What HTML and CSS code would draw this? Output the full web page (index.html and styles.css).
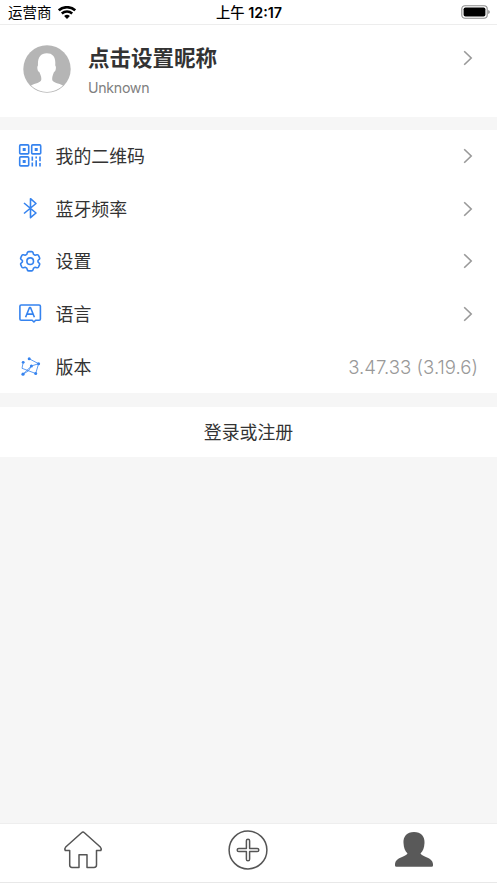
FILE: index.html
```
<!DOCTYPE html>
<html lang="zh-CN">
<head>
<meta charset="utf-8">
<title>我的</title>
<link rel="stylesheet" href="styles.css">
</head>
<body>
<header class="status">
  <div class="carrier"><span>运营商</span>
    <svg width="18" height="13" viewBox="0 0 18 13"><g fill="none" stroke="#000" stroke-width="2.5"><path d="M.8 4.3C5.4.1 12.6.1 17.2 4.3"/><path d="M3.8 7.5C6.8 4.8 11.2 4.8 14.2 7.5"/></g><path d="M6.1 10Q9 7.6 11.9 10L9 12.9Z"/></svg>
  </div>
  <div class="time">上午 <b>12:17</b></div>
  <svg class="battery" width="29" height="14" viewBox="0 0 29 14"><rect x=".8" y=".8" width="25.4" height="12.4" rx="3.2" fill="#fff" stroke="#8c8c8c" stroke-width="1.1"/><rect x="2.6" y="2.4" width="21.8" height="9.2" rx="1.8"/><path d="M27.3 5v4q1.4-.5 1.4-2t-1.4-2" fill="#777"/></svg>
</header>
<section class="profile">
  <svg class="avatar" width="48" height="48" viewBox="0 0 48 48"><circle cx="24" cy="24" r="23.7" fill="#b5b5b5"/><path d="M8 40.5C12 38 18 38 18.3 34.5C18.5 31.5 17.5 30 16.3 27C14.2 26.4 13.8 21.3 15 20.4C14.5 12.5 17.5 8.3 23.8 8.3S33 12.5 32.2 20.4C33.5 21.3 33 26.4 31 27C30 30 29 31.5 29.2 34.5C29.5 38 36 38 40 40.5A23.1 23.1 0 0 1 8 40.5Z" fill="#fff"/></svg>
  <div class="identity"><h1>点击设置昵称</h1><p>Unknown</p></div>
  <svg class="chevron" width="10" height="16" viewBox="0 0 10 16"><path d="M1.2 1.2L8.2 8L1.2 14.8"/></svg>
</section>
<main class="menu">
  <div class="row">
    <svg class="icon" viewBox="0 0 24 24"><rect x="1.7" y=".9" width="9" height="9" rx="1"/><rect x="13.7" y=".9" width="9" height="9" rx="1"/><rect x="1.7" y="12.9" width="9" height="9" rx="1"/><path class="solid" d="M4.7 3.9h3v3h-3zM16.7 3.9h3v3h-3zM4.7 15.9h3v3h-3z"/><path d="M14.3 12.5v4.3M14.3 18.5v4M18.2 12.5v2M18.2 16.2v6.3M22 12.5v4.8M22 19v3.5"/></svg>
    <span class="label">我的二维码</span>
    <svg class="chevron" width="10" height="16" viewBox="0 0 10 16"><path d="M1.2 1.2L8.2 8L1.2 14.8"/></svg>
  </div>
  <div class="row">
    <svg class="icon" viewBox="0 0 24 24"><path d="M6 6L18 16L12.5 20.7V1.7L18 6.5L6 16.5"/></svg>
    <span class="label">蓝牙频率</span>
    <svg class="chevron" width="10" height="16" viewBox="0 0 10 16"><path d="M1.2 1.2L8.2 8L1.2 14.8"/></svg>
  </div>
  <div class="row">
    <svg class="icon" viewBox="0 0 24 24"><path d="M9.3 3.6Q9.7 2.6 10.7 2.6H13.7Q14.7 2.6 15 3.6L15.5 5.4L17.2 6.3L18.9 5.8Q19.9 5.5 20.4 6.4L21.5 8.7Q22 9.6 21.2 10.3L20 11.5V13L21.2 14.2Q22 14.9 21.5 15.8L20.4 18.1Q19.9 19 18.9 18.7L17.2 18.2L15.5 19.1L15 20.9Q14.7 21.9 13.7 21.9H10.7Q9.7 21.9 9.3 20.9L8.8 19.1L7.1 18.2L5.4 18.7Q4.4 19 3.9 18.1L2.8 15.8Q2.3 14.9 3.1 14.2L4.4 13V11.5L3.1 10.3Q2.3 9.6 2.8 8.7L3.9 6.4Q4.4 5.5 5.4 5.8L7.1 6.3L8.8 5.4Z"/><circle cx="12.2" cy="12.2" r="3.3"/></svg>
    <span class="label">设置</span>
    <svg class="chevron" width="10" height="16" viewBox="0 0 10 16"><path d="M1.2 1.2L8.2 8L1.2 14.8"/></svg>
  </div>
  <div class="row">
    <svg class="icon" viewBox="0 0 24 24"><path d="M3.2 3H21.1Q22.4 3 22.4 4.3V17Q22.4 18.3 21.1 18.3H17.6L15.9 20L14.2 18.3H3.2Q1.9 18.3 1.9 17V4.3Q1.9 3 3.2 3ZM7.6 15.3L11.5 5.5H12.5L16.4 15.3M9 12.1H15"/></svg>
    <span class="label">语言</span>
    <svg class="chevron" width="10" height="16" viewBox="0 0 10 16"><path d="M1.2 1.2L8.2 8L1.2 14.8"/></svg>
  </div>
  <div class="row">
    <svg class="icon network" viewBox="0 0 24 24"><path d="M5.2 7.3L4 13.3L17.7 18.5L20.6 8.7L11.2 3.8M5 19.2L13.4 11L20.6 8.7M5 19.2L10.5 15.8L13.4 11"/><g class="solid"><circle cx="5.2" cy="7.3" r="1.4"/><circle cx="11.2" cy="3.8" r="1.5"/><circle cx="20.6" cy="8.7" r="1.5"/><circle cx="13.4" cy="11" r="1.5"/><circle cx="5" cy="19.2" r="1.6"/><circle cx="17.7" cy="18.5" r="1.5"/></g></svg>
    <span class="label">版本</span>
    <span class="version">3.47.33 (3.19.6)</span>
  </div>
</main>
<div class="login">登录或注册</div>
<nav class="tabs">
  <svg viewBox="0 0 40 40"><path d="M18.6 2.7Q20 1.3 21.4 2.7L37.3 17Q38.8 18.6 37.8 20.6H33.5V35Q33.5 37.4 31 37.4H24V24.8H16V37.4H9Q6.7 37.4 6.7 35V20.6H2.3Q1.3 18.6 2.7 17Z"/></svg>
  <svg viewBox="0 0 40 40"><circle cx="20" cy="20" r="18.9"/><path d="M18.4 10.8a1.6 1.6 0 0 1 3.2 0v7.6h7.6a1.6 1.6 0 0 1 0 3.2h-7.6v7.6a1.6 1.6 0 0 1-3.2 0v-7.6h-7.6a1.6 1.6 0 0 1 0-3.2h7.6Z"/></svg>
  <svg class="active" viewBox="0 0 40 40"><path d="M20 2C27 2 31 6.5 30.5 13C30.2 18 29 21 26.5 23.5C27.5 26.5 38.8 27.5 39 34V35.5Q39 36.8 37.5 36.8H2.5Q1 36.8 1 35.5V34C1.2 27.5 12.5 26.5 13.5 23.5C11 21 9.8 18 9.5 13C9 6.5 13 2 20 2Z"/></svg>
</nav>
</body>
</html>
```
FILE: styles.css
```
* { box-sizing: border-box; }
body {
  margin: 0;
  height: 883px;
  display: flex;
  flex-direction: column;
  background: #f6f6f6;
  color: #333;
  font-family: Inter, "Noto Sans CJK SC", sans-serif;
}
svg { display: block; flex: none; }
.status {
  height: 25px;
  flex: none;
  display: grid;
  grid-template-columns: 1fr auto 1fr;
  align-items: center;
  padding: 0 7px 0 8px;
  background: #fff;
  border-bottom: 1px solid #ededed;
  color: #000;
  font-size: 14.5px;
  line-height: 24px;
}
.carrier { display: flex; align-items: center; gap: 6px; }
.carrier span, .time { padding-top: 2px; line-height: 22px; }
.time { font-size: 14.3px; font-weight: 500; white-space: nowrap; }
.time b { font-weight: 600; }
.battery { justify-self: end; }
.profile {
  height: 92px;
  flex: none;
  display: flex;
  align-items: flex-start;
  padding: 20px 24px 0 23px;
  background: #fff;
}
.identity { margin-left: 17px; flex: 1; }
h1 { margin: -2px 0 0; font-size: 21.5px; line-height: 30px; font-weight: 700; }
p { margin: 5px 0 0; font-size: 14.2px; line-height: 20px; letter-spacing: -.3px; color: #808080; }
.profile .chevron { margin-top: 5px; }
.chevron path { fill: none; stroke: #999; stroke-width: 1.6; }
.menu {
  height: 263px;
  flex: none;
  display: grid;
  grid-template-rows: repeat(5, 1fr);
  margin-top: 13px;
  background: #fff;
}
.row { display: flex; align-items: center; padding: 0 24px 0 18px; }
.icon { width: 24px; height: 24px; fill: none; stroke: #3583ef; stroke-width: 1.6; stroke-linejoin: round; }
.icon .solid { fill: #3583ef; stroke: none; }
.network { stroke-width: .8; }
.label { margin-left: 13.5px; padding-top: 2px; flex: 1; font-size: 17.9px; line-height: 26px; }
.version { margin-right: -5px; font-size: 18.6px; font-weight: 350; color: #999; }
.login {
  height: 50px;
  flex: none;
  margin-top: 14px;
  padding-top: 1px;
  background: #fff;
  font-size: 17.9px;
  line-height: 50px;
  text-align: center;
}
.tabs {
  height: 60px;
  flex: none;
  margin-top: auto;
  display: grid;
  grid-template-columns: repeat(3, 1fr);
  justify-items: center;
  padding-top: 6px;
  background: #fff;
  border-top: 1px solid #eee;
  border-bottom: 1px solid #e8e8e8;
}
.tabs svg { width: 40px; height: 40px; fill: none; stroke: #555; stroke-width: 1.5; stroke-linejoin: round; }
.tabs .active { fill: #595959; stroke: none; }
```
